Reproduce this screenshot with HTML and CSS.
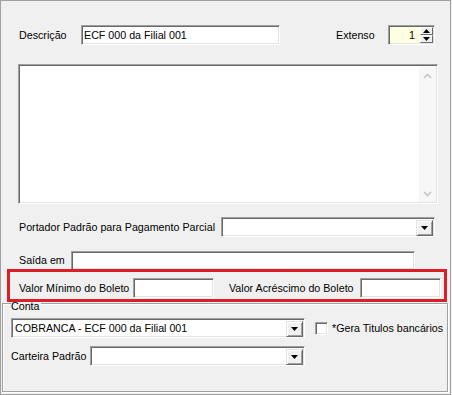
FILE: index.html
```html
<!DOCTYPE html>
<html lang="pt-BR">

<head>
  <meta charset="UTF-8" />
  <title>Portador</title>
  <link rel="stylesheet" href="styles.css">
</head>

<body>
  <div class="panel">
    <div class="top">
      <div class="row row-desc">
        <span class="lbl lbl-desc">Descrição</span>
        <div class="edit box-desc">ECF 000 da Filial 001</div>
        <span class="lbl lbl-ext">Extenso</span>
        <div class="edit spin">
          <span class="spin-val">1</span>
          <div class="spin-btns">
            <span class="sbtn"><svg width="7" height="4" viewBox="0 0 7 4"><path d="M3.5 0L7 4H0z" fill="#000" /></svg></span>
            <span class="sbtn"><svg width="7" height="4" viewBox="0 0 7 4"><path d="M0 0h7L3.5 4z" fill="#000" /></svg></span>
          </div>
        </div>
      </div>

      <div class="edit memo">
        <div class="memo-text"></div>
        <div class="vscroll">
          <svg width="9" height="6" viewBox="0 0 9 6"><path d="M1 5L4.5 1.5 8 5" fill="none" stroke="#c4c4c4" stroke-width="1.6" /></svg>
          <svg width="9" height="6" viewBox="0 0 9 6"><path d="M1 1L4.5 4.5 8 1" fill="none" stroke="#c4c4c4" stroke-width="1.6" /></svg>
        </div>
      </div>

      <div class="row row-port">
        <span class="lbl lbl-port">Portador Padrão para Pagamento Parcial</span>
        <div class="edit combo box-port">
          <span class="combo-text"></span>
          <span class="drop"><svg width="7" height="4" viewBox="0 0 7 4"><path d="M0 0h7L3.5 4z" fill="#000" /></svg></span>
        </div>
      </div>

      <div class="row row-saida">
        <span class="lbl lbl-saida">Saída em</span>
        <div class="edit box-saida"></div>
      </div>

      <div class="row row-valor">
        <span class="lbl lbl-min">Valor Mínimo do Boleto</span>
        <div class="edit box-valor"></div>
        <span class="lbl lbl-acr">Valor Acréscimo do Boleto</span>
        <div class="edit box-valor"></div>
      </div>
    </div>

    <div class="highlight"></div>

    <div class="group">
      <span class="caption">Conta</span>
      <div class="row row-conta">
        <div class="edit combo box-conta">
          <span class="combo-text">COBRANCA - ECF 000 da Filial 001</span>
          <span class="drop"><svg width="7" height="4" viewBox="0 0 7 4"><path d="M0 0h7L3.5 4z" fill="#000" /></svg></span>
        </div>
        <span class="check"></span>
        <span class="lbl lbl-check">*Gera Titulos bancários</span>
      </div>
      <div class="row row-cart">
        <span class="lbl lbl-cart">Carteira Padrão</span>
        <div class="edit combo box-cart">
          <span class="combo-text"></span>
          <span class="drop"><svg width="7" height="4" viewBox="0 0 7 4"><path d="M0 0h7L3.5 4z" fill="#000" /></svg></span>
        </div>
      </div>
    </div>
  </div>
</body>

</html>
```

FILE: styles.css
```css
* {
  margin: 0;
  padding: 0;
  box-sizing: border-box;
}

body {
  background: #f0f0f0;
  font-family: 'Liberation Sans', Arial, sans-serif;
  font-size: 10.7px;
  color: #000;
}

.panel {
  position: relative;
  width: 451px;
  height: 395px;
  border: 1px solid #a0a0a0;
  background: #f0f0f0;
}

.top {
  padding-left: 17px;
}

.row {
  display: flex;
  align-items: center;
}

.lbl {
  white-space: nowrap;
  line-height: 13px;
}

/* sunken 3d edit */
.edit {
  height: 20px;
  background: #fff;
  border: 1px solid;
  border-color: #a0a0a0 #fff #fff #a0a0a0;
  box-shadow: inset 1px 1px 0 #696969, inset -1px -1px 0 #e3e3e3;
  padding: 2px 0 0 2px;
  line-height: 15px;
  white-space: nowrap;
}

.row-desc {
  margin-top: 24px;
}

.lbl-desc {
  width: 63px;
  padding-left: 1px;
}

.box-desc {
  width: 199px;
}

.lbl-ext {
  margin-left: 56px;
  width: 52px;
}

.spin {
  width: 47px;
  background: #ffffe1;
  display: flex;
  padding: 1px 1px 1px 0;
}

.spin-val {
  flex: 1;
  text-align: right;
  padding-right: 5px;
  padding-top: 1px;
}

.spin-btns {
  display: flex;
  flex-direction: column;
  width: 13px;
}

.sbtn {
  height: 8px;
  flex: 1;
  display: flex;
  align-items: center;
  justify-content: center;
  background: #f0f0f0;
  border: 1px solid;
  border-color: #fff #696969 #696969 #fff;
}

.memo {
  margin-top: 19px;
  width: 420px;
  height: 140px;
  display: flex;
  padding: 2px 1px 1px 2px;
}

.memo-text {
  flex: 1;
}

.vscroll {
  width: 17px;
  background: #f7f7f7;
  display: flex;
  flex-direction: column;
  justify-content: space-between;
  align-items: center;
  padding: 6px 0 5px;
}

.row-port {
  margin-top: 13px;
}

.lbl-port {
  width: 203px;
  padding-left: 1px;
}

.combo {
  display: flex;
  justify-content: space-between;
  padding: 2px 1px 1px 2px;
}

.combo-text {
  padding-left: 1px;
  line-height: 15px;
}

.drop {
  width: 17px;
  height: 16px;
  display: flex;
  align-items: center;
  justify-content: center;
  background: #f0f0f0;
  border: 1px solid;
  border-color: #e3e3e3 #696969 #696969 #e3e3e3;
  box-shadow: inset 1px 1px 0 #fff, inset -1px -1px 0 #a0a0a0;
}

.box-port {
  width: 214px;
}

.row-saida {
  margin-top: 14px;
}

.lbl-saida {
  width: 53px;
  padding-left: 1px;
}

.box-saida {
  width: 344px;
  height: 19px;
}

.row-valor {
  margin-top: 8px;
}

.lbl-min {
  width: 115px;
  padding-left: 1px;
}

.lbl-acr {
  margin-left: 15px;
  width: 131px;
}

.box-valor {
  width: 81px;
}

/* red annotation frame drawn over the form */
.highlight {
  position: absolute;
  left: 6px;
  top: 268px;
  width: 440px;
  height: 33px;
  border: 3px solid #dc1f26;
}

.group {
  margin: 5px 0 0 1px;
  width: 446px;
  height: 89px;
  border: 1px solid #a0a0a0;
  box-shadow: inset 1px 1px 0 #fff, 1px 1px 0 #fff;
  padding-left: 8px;
}

.caption {
  display: inline-block;
  margin-top: -4px;
  padding: 0 1px 0 0;
  background: #f0f0f0;
  line-height: 13px;
  vertical-align: top;
}

.row-conta {
  margin-top: 2px;
}

.box-conta {
  width: 294px;
}

.check {
  width: 13px;
  height: 13px;
  margin-left: 10px;
  background: #fff;
  border: 1px solid;
  border-color: #a0a0a0 #fff #fff #a0a0a0;
  box-shadow: inset 1px 1px 0 #696969, inset -1px -1px 0 #e3e3e3;
}

.lbl-check {
  margin-left: 4px;
}

.row-cart {
  margin-top: 8px;
}

.lbl-cart {
  width: 79px;
}

.box-cart {
  width: 215px;
}
```
